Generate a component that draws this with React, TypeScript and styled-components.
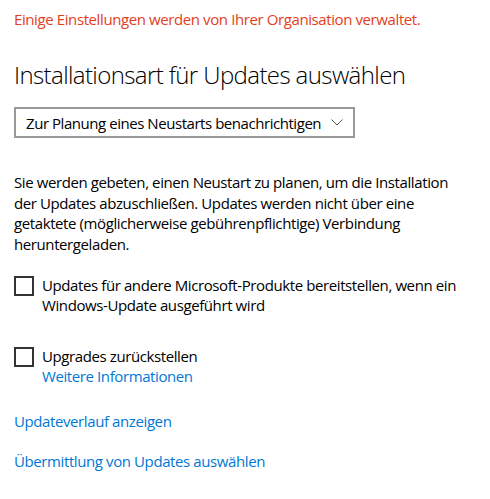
import React from 'react';
import styled, { createGlobalStyle } from 'styled-components';

const GlobalStyle = createGlobalStyle`
  html, body {
    margin: 0;
    padding: 0;
    background: #ffffff;
  }
  body {
    font-family: 'Open Sans', 'Noto Sans', 'Liberation Sans', sans-serif;
    color: #000000;
    letter-spacing: -0.4px;
  }
`;

const Page = styled.div`
  width: 490px;
  height: 499px;
  box-sizing: border-box;
  padding: 9px 14px 0 14px;
  overflow: hidden;
  display: flex;
  flex-direction: column;
  align-items: flex-start;
`;

const ManagedNotice = styled.div`
  font-size: 15px;
  line-height: 20px;
  color: #e2401c;
`;

const Title = styled.h1`
  margin: 30px 0 0 0;
  font-size: 24px;
  font-weight: 300;
  line-height: 32px;
  letter-spacing: -0.6px;
  color: #000000;
`;

const Select = styled.div`
  margin-top: 16px;
  width: 341px;
  height: 31px;
  box-sizing: border-box;
  border: 2px solid #999999;
  display: flex;
  align-items: center;
  justify-content: space-between;
  padding: 0 10px 0 10px;
  font-size: 15px;
  letter-spacing: -0.45px;
  white-space: nowrap;
`;

const Chevron = styled.svg`
  width: 12px;
  height: 7px;
  flex-shrink: 0;
`;

const Description = styled.p`
  margin: 34px 0 0 0;
  font-size: 15px;
  line-height: 20.7px;
  width: 450px;
`;

const CheckRow = styled.div<{ $gap: number }>`
  margin-top: ${(p) => p.$gap}px;
  display: flex;
  align-items: flex-start;
  gap: 8px;
`;

const Box = styled.span`
  width: 20px;
  height: 20px;
  box-sizing: border-box;
  border: 2px solid #333333;
  flex-shrink: 0;
`;

const CheckText = styled.div`
  font-size: 15px;
  line-height: 20px;
  margin-top: -1px;
  width: 430px;
`;

const Link = styled.a<{ $gap?: number }>`
  display: block;
  margin-top: ${(p) => p.$gap ?? 0}px;
  font-size: 15px;
  line-height: 20px;
  color: #0078d7;
  text-decoration: none;
  cursor: pointer;
`;

const App: React.FC = () => {
  return (
    <>
      <GlobalStyle />
      <Page>
        <ManagedNotice>Einige Einstellungen werden von Ihrer Organisation verwaltet.</ManagedNotice>
        <Title>Installationsart für Updates auswählen</Title>
        <Select>
          <span>Zur Planung eines Neustarts benachrichtigen</span>
          <Chevron viewBox="0 0 12 7">
            <path d="M0.5 0.5 L6 6 L11.5 0.5" fill="none" stroke="#555" strokeWidth="1" />
          </Chevron>
        </Select>
        <Description>
          Sie werden gebeten, einen Neustart zu planen, um die Installation
          der Updates abzuschließen. Updates werden nicht über eine
          getaktete (möglicherweise gebührenpflichtige) Verbindung
          heruntergeladen.
        </Description>
        <CheckRow $gap={21}>
          <Box />
          <CheckText>
            Updates für andere Microsoft-Produkte bereitstellen, wenn ein
            Windows-Update ausgeführt wird
          </CheckText>
        </CheckRow>
        <CheckRow $gap={32}>
          <Box />
          <CheckText>
            Upgrades zurückstellen
            <Link>Weitere Informationen</Link>
          </CheckText>
        </CheckRow>
        <Link $gap={25}>Updateverlauf anzeigen</Link>
        <Link $gap={20}>Übermittlung von Updates auswählen</Link>
      </Page>
    </>
  );
};

export default App;
